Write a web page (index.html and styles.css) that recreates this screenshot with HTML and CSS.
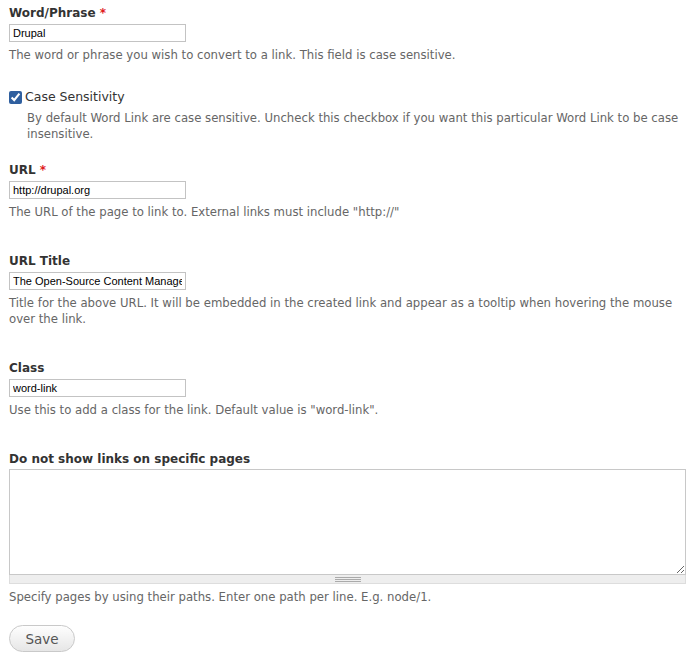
FILE: index.html
```html
<!DOCTYPE html>
<html>
<head>
<meta charset="utf-8">
<link rel="stylesheet" href="styles.css">
</head>
<body>
<form class="form">
  <div class="item">
    <label class="label">Word/Phrase <span class="req">*</span></label>
    <input class="text" type="text" value="Drupal">
    <div class="desc">The word or phrase you wish to convert to a link. This field is case sensitive.</div>
  </div>

  <div class="item check-item">
    <label class="check-label"><input type="checkbox" class="check" checked> Case Sensitivity</label>
    <div class="desc indent">By default Word Link are case sensitive. Uncheck this checkbox if you want this particular Word Link to be case insensitive.</div>
  </div>

  <div class="item">
    <label class="label">URL <span class="req">*</span></label>
    <input class="text" type="text" value="http://drupal.org">
    <div class="desc">The URL of the page to link to. External links must include "http://"</div>
  </div>

  <div class="item">
    <label class="label">URL Title</label>
    <input class="text" type="text" value="The Open-Source Content Management Platform">
    <div class="desc">Title for the above URL. It will be embedded in the created link and appear as a tooltip when hovering the mouse over the link.</div>
  </div>

  <div class="item">
    <label class="label">Class</label>
    <input class="text" type="text" value="word-link">
    <div class="desc">Use this to add a class for the link. Default value is "word-link".</div>
  </div>

  <div class="item">
    <label class="label label-area">Do not show links on specific pages</label>
    <div class="area-wrap">
      <textarea class="area"></textarea>
      <div class="grippie"><span class="grip"></span></div>
    </div>
    <div class="desc">Specify pages by using their paths. Enter one path per line. E.g. node/1.</div>
  </div>

  <button type="button" class="save">Save</button>
</form>
</body>
</html>
```

FILE: styles.css
```css
body {
  margin: 0;
  padding: 4px 9px 0 9px;
  font-family: "DejaVu Sans", Verdana, sans-serif;
  color: #333;
  background: #fff;
}
.form {
  display: flex;
  flex-direction: column;
  align-items: flex-start;
}
.item {
  display: flex;
  flex-direction: column;
  align-items: flex-start;
  width: 100%;
  margin-bottom: 32px;
}
.label {
  font-size: 12px;
  font-weight: bold;
  line-height: 18px;
  color: #333;
  margin-bottom: 2px;
}
.label-area {
  margin-bottom: 1px;
}
.req {
  color: #e01b1b;
}
.text {
  box-sizing: border-box;
  width: 177px;
  height: 18px;
  margin: 0;
  padding: 1px 3px;
  border: 1px solid #c3c3c3;
  font-family: "Liberation Sans", Arial, sans-serif;
  font-size: 11px;
  color: #000;
}
.desc {
  font-size: 11.7px;
  line-height: 16px;
  color: #666;
  margin-top: 5px;
}
.indent {
  padding-left: 18px;
  margin-top: 4px;
}
.check-item {
  margin-top: -7px;
  margin-bottom: 19px;
}
.check-label {
  display: flex;
  align-items: center;
  font-size: 12.5px;
  line-height: 18px;
  color: #333;
}
.check {
  width: 13px;
  height: 13px;
  margin: 0 3px 0 0;
  accent-color: #2f5f9f;
}
.area-wrap {
  width: 677px;
  display: flex;
  flex-direction: column;
}
.area {
  box-sizing: border-box;
  width: 677px;
  height: 106px;
  margin: 0;
  border: 1px solid #c8c8c8;
  display: block;
}
.grippie {
  box-sizing: border-box;
  height: 9px;
  background: #eee;
  border: 1px solid #ddd;
  border-top: none;
  display: flex;
  justify-content: center;
  align-items: center;
}
.grip {
  width: 26px;
  height: 5px;
  box-sizing: border-box;
  background: repeating-linear-gradient(#aaa 0 1px, transparent 1px 2px);
}
.save {
  margin-top: -12px;
  width: 66px;
  height: 27px;
  border: 1px solid #c9c9c9;
  border-radius: 14px;
  background: linear-gradient(#fefefe, #e6e6e6);
  font-family: "DejaVu Sans", Verdana, sans-serif;
  font-size: 13.5px;
  color: #555;
  padding: 0;
}
```
